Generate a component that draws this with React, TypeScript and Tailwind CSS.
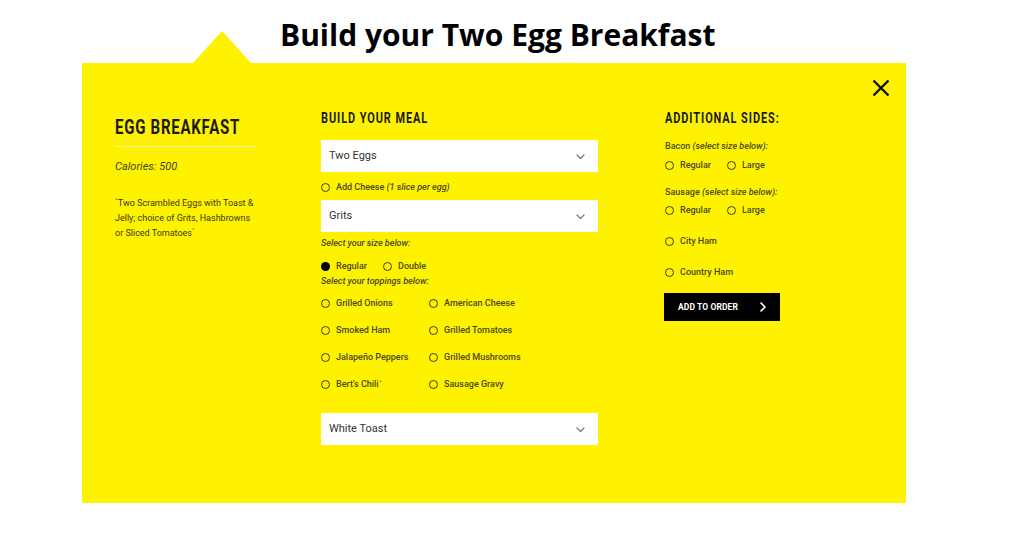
import React from "react";

const Y = "#fff200";

function Chevron() {
  return (
    <svg width="9" height="6" viewBox="0 0 9 6" fill="none">
      <path d="M1 1 L4.5 4.5 L8 1" stroke="#777" strokeWidth="1.2" strokeLinecap="round" strokeLinejoin="round" />
    </svg>
  );
}

function Select({ label }: { label: string }) {
  return (
    <div className="h-[32px] w-[277px] bg-white flex items-center justify-between pl-[8px] pr-[13px] pt-[1px] text-[11px] text-[#333]" style={{ fontFamily: "Roboto, sans-serif" }}>
      <span>{label}</span>
      <Chevron />
    </div>
  );
}

function Radio({ label, checked, className = "" }: { label: React.ReactNode; checked?: boolean; className?: string }) {
  return (
    <div className={"flex items-center h-[14px] gap-[6px] text-[9px] text-[#4a4822] font-medium " + className}>
      <span className={"w-[9px] h-[9px] rounded-full shrink-0 " + (checked ? "bg-black" : "border-[1.5px] border-[#3b3a1a]")} />
      <span className="pt-[1px]">{label}</span>
    </div>
  );
}

function Heading({ children, size, scale }: { children: React.ReactNode; size: string; scale: string }) {
  return (
    <div className={"h-full flex items-center whitespace-nowrap font-bold text-[#1a1a1a] leading-none origin-left " + size + " " + scale} style={{ fontFamily: "Roboto, sans-serif" }}>
      {children}
    </div>
  );
}

export default function App() {
  return (
    <div className="w-[1024px] h-[536px] bg-white overflow-hidden" style={{ fontFamily: "Roboto, sans-serif" }}>
      <div className="h-[63px] flex items-center pl-[280px] pt-[6px]">
        <h1 className="text-[30px] font-bold text-black leading-none tracking-[0px]" style={{ fontFamily: '"Open Sans", sans-serif' }}>
          Build your Two Egg Breakfast
        </h1>
      </div>
      <div className="relative ml-[82px] w-[824px] h-[440px] flex" style={{ backgroundColor: Y }}>
        <div className="absolute left-[111px] top-[-32px] w-0 h-0 border-l-[29px] border-r-[29px] border-b-[32px] border-l-transparent border-r-transparent border-b-[#fff200]" />
        <button className="absolute right-[16px] top-[16px] w-[18px] h-[18px]">
          <svg width="18" height="18" viewBox="0 0 18 18">
            <path d="M1.5 1.5 L16.5 16.5 M16.5 1.5 L1.5 16.5" stroke="#111" strokeWidth="2.4" />
          </svg>
        </button>

        {/* left column */}
        <div className="ml-[33px] w-[141px] pt-[52px] flex flex-col">
          <div className="h-[24px]">
            <Heading size="text-[20px] tracking-[1px]" scale="scale-x-[0.75]">EGG BREAKFAST</Heading>
          </div>
          <div className="mt-[7px] h-[1px] bg-[#f4f0b0]" />
          <div className="mt-[12px] h-[14px] flex items-center pt-[2px] text-[11px] italic text-[#44421e]">Calories: 500</div>
          <p className="mt-[23px] w-[141px] text-[9px] leading-[15px] text-[#3a3818]">
            `Two Scrambled Eggs with Toast &amp; Jelly; choice of Grits, Hashbrowns or Sliced Tomatoes`
          </p>
        </div>

        {/* middle column */}
        <div className="ml-[65px] w-[277px] pt-[47px] flex flex-col">
          <div className="h-[16px]">
            <Heading size="text-[14px] tracking-[1.2px]" scale="scale-x-[0.78]">BUILD YOUR MEAL</Heading>
          </div>
          <div className="mt-[14px]"><Select label="Two Eggs" /></div>
          <Radio className="mt-[8px]" label={<>Add Cheese <i>(1 slice per egg)</i></>} />
          <div className="mt-[6px]"><Select label="Grits" /></div>
          <div className="mt-[5px] h-[12px] flex items-center pt-[1px] text-[9px] italic font-medium text-[#4a4822]">Select your size below:</div>
          <div className="mt-[10px] flex">
            <Radio className="w-[62px]" label="Regular" checked />
            <Radio label="Double" />
          </div>
          <div className="mt-[2px] h-[12px] flex items-center pt-[1px] text-[9px] italic font-medium text-[#4a4822]">Select your toppings below:</div>
          <div className="mt-[9px] grid grid-cols-[108px_1fr] gap-y-[13px]">
            <Radio label="Grilled Onions" />
            <Radio label="American Cheese" />
            <Radio label="Smoked Ham" />
            <Radio label="Grilled Tomatoes" />
            <Radio label="Jalapeño Peppers" />
            <Radio label="Grilled Mushrooms" />
            <Radio label={<>Bert's Chili<sup className="text-[5px]">™</sup></>} />
            <Radio label="Sausage Gravy" />
          </div>
          <div className="mt-[22px]"><Select label="White Toast" /></div>
        </div>

        {/* right column */}
        <div className="ml-[67px] w-[160px] pt-[47px] flex flex-col">
          <div className="h-[16px]">
            <Heading size="text-[14px] tracking-[1.2px]" scale="scale-x-[0.78]">ADDITIONAL SIDES:</Heading>
          </div>
          <div className="mt-[14px] h-[12px] flex items-center pt-[1px] text-[9px] font-medium text-[#4a4822]">Bacon&nbsp;<i>(select size below):</i></div>
          <div className="mt-[6px] flex">
            <Radio className="w-[62px]" label="Regular" />
            <Radio label="Large" />
          </div>
          <div className="mt-[14px] h-[12px] flex items-center pt-[1px] text-[9px] font-medium text-[#4a4822]">Sausage&nbsp;<i>(select size below):</i></div>
          <div className="mt-[5px] flex">
            <Radio className="w-[62px]" label="Regular" />
            <Radio label="Large" />
          </div>
          <Radio className="mt-[17px]" label="City Ham" />
          <Radio className="mt-[17px]" label="Country Ham" />
          <button className="mt-[14px] w-[116px] h-[28px] bg-black flex items-center justify-between pl-[14px] pr-[14px] -ml-[1px]">
            <span className="text-[8.5px] font-bold text-white tracking-[0.1px]">ADD TO ORDER</span>
            <svg width="6" height="10" viewBox="0 0 6 10" fill="none">
              <path d="M1 1 L5 5 L1 9" stroke="#fff" strokeWidth="1.6" strokeLinecap="round" strokeLinejoin="round" />
            </svg>
          </button>
        </div>
      </div>
    </div>
  );
}
